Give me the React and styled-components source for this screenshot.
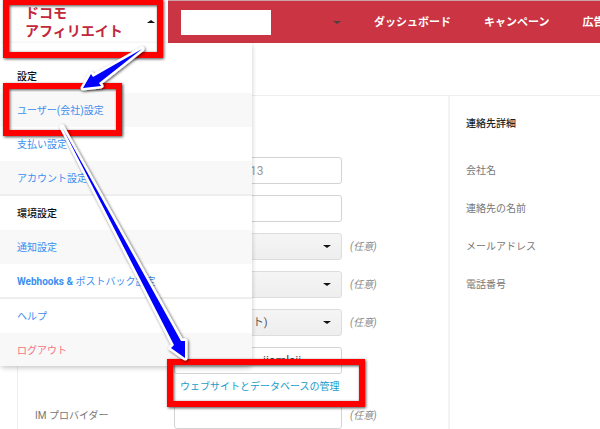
import React from "react";
import styled, { createGlobalStyle } from "styled-components";

const GlobalStyle = createGlobalStyle`
  * {
    box-sizing: border-box;
  }
  body {
    margin: 0;
    overflow: hidden;
    background: #fff;
    color: #777;
    font-family: Roboto, "Noto Sans CJK JP", sans-serif;
    font-size: 10px;
    line-height: 14px;
  }
  a {
    text-decoration: none;
  }
`;

const Page = styled.div`
  position: relative;
  min-height: 100vh;
  overflow: hidden;
`;
const Header = styled.header`
  display: flex;
  height: 43px;
`;
const Brand = styled.button`
  flex: 0 0 168px;
  display: flex;
  align-items: center;
  justify-content: space-between;
  padding: 0 13px 0 25px;
  border: 0;
  background: #fff;
  font: inherit;
`;
const Logo = styled.span`
  font-size: 14px;
  font-weight: 700;
  line-height: 18px;
  text-align: left;
  white-space: nowrap;
  color: #c1283c;
`;
const Bar = styled.div`
  flex: 1;
  min-width: 0;
  display: flex;
  align-items: center;
  padding-left: 13px;
  border-top: 1px solid #c9a3a8;
  background: #cb3442;
`;
const Account = styled.button`
  flex: 0 0 160px;
  display: flex;
  align-items: center;
  justify-content: space-between;
  padding: 0;
  border: 0;
  background: none;
`;
const AccountName = styled.span`
  width: 90px;
  height: 25px;
  background: #fff;
`;
const Nav = styled.nav`
  display: flex;
  gap: 33px;
  margin-left: 33px;
`;
const NavLink = styled.a`
  padding-top: 2px;
  font-size: 11px;
  font-weight: 700;
  line-height: 16px;
  white-space: nowrap;
  color: #fff;
`;
const Caret = styled.span`
  width: 0;
  height: 0;
  border: solid transparent;
  border-width: ${({ $up }) => ($up ? "0 4px 3px" : "3px 4px 0")};
  border-${({ $up }) => ($up ? "bottom" : "top")}-color: ${({ $color }) => $color || "#111"};
`;

const Menu = styled.nav`
  position: absolute;
  z-index: 1;
  top: 43px;
  left: 0;
  width: 252px;
  padding-top: 16px;
  border-radius: 0 0 5px 5px;
  background: #fff;
  box-shadow: 0 2px 5px rgba(0, 0, 0, 0.22);
`;
const MenuGroup = styled.div`
  & + & {
    border-top: 2px solid #eee;
  }
`;
const MenuTitle = styled.div`
  padding: 11px 17px 9px;
  font-weight: 500;
  color: #111;
`;
const MenuLink = styled.a`
  display: block;
  padding: 11px 17px 9px;
  background: ${({ $shade }) => ($shade ? "#f8f8f8" : "#fff")};
  color: ${({ $danger }) => ($danger ? "#f67280" : "#3c8ff0")};

  &:last-child {
    padding-bottom: 8px;
  }
`;
const Strong = styled.span`
  font-weight: 700;
`;

const Content = styled.main`
  display: flex;
  min-height: 334px;
  margin-top: 52px;
  border-top: 1px solid #eee;
`;
const Details = styled.form`
  flex: 0 0 433px;
  display: flex;
  flex-direction: column;
  gap: 11px;
  margin-left: 17px;
  padding: 61px 0 0 17px;
  border-left: 1px solid #eee;
  border-right: 2px solid #f3f3f3;
`;
const Field = styled.div`
  display: grid;
  grid-template-columns: 139px 168px auto;
  align-items: center;
`;
const Label = styled.label`
  white-space: nowrap;
`;
const Control = styled.div`
  display: grid;
  align-items: center;
  justify-items: end;

  & > * {
    grid-area: 1 / 1;
  }
  & > span {
    margin-right: 11px;
    pointer-events: none;
  }
`;
const Input = styled.input`
  width: 100%;
  height: 27px;
  padding: 0 8px 0 ${({ $indent }) => $indent || 8}px;
  border: 1px solid #d3d3d3;
  border-radius: 3px;
  background: #fff;
  font: inherit;
  font-size: 12px;
  color: ${({ $dark }) => ($dark ? "#444" : "#999")};
`;
const Select = styled.select`
  width: 100%;
  height: 27px;
  padding: 0 12px;
  appearance: none;
  border: 1px solid #ddd;
  border-radius: 3px;
  background: linear-gradient(#f5f5f5, #eee);
  font: inherit;
  font-size: 11px;
  color: #555;
`;
const Optional = styled.span`
  padding-left: 8px;
  font-style: italic;
  color: #888;
`;
const ManageLink = styled.a`
  align-self: flex-start;
  margin: -5px 0 -3px 145px;
  white-space: nowrap;
  color: #169dcc;
`;

const Contact = styled.section`
  flex: 1;
  padding: 21px 16px;
`;
const ContactTitle = styled.h2`
  margin: 0 0 33px;
  font-size: 10px;
  font-weight: 500;
  color: #222;
`;
const ContactRow = styled.div`
  margin-bottom: 24px;
`;

const Marks = styled.svg`
  position: absolute;
  z-index: 2;
  top: 0;
  left: 0;
  pointer-events: none;
`;

const menu = [
  {
    title: "設定",
    links: [
      { text: "ユーザー(会社)設定", shade: true },
      { text: "支払い設定" },
      { text: "アカウント設定", shade: true },
    ],
  },
  {
    title: "環境設定",
    links: [
      { text: "通知設定", shade: true },
      { strong: "Webhooks & ", text: "ポストバック設定" },
    ],
  },
  {
    links: [{ text: "ヘルプ" }, { text: "ログアウト", shade: true, danger: true }],
  },
];

const fields = [
  { id: "account", value: "13", indent: 75 },
  { id: "company" },
  { id: "currency", options: [""], optional: true },
  { id: "timezone", options: [""], optional: true },
  { id: "kind", options: ["アフィリエイト)"], optional: true },
  { id: "site", value: "iiomlsii", indent: 88, dark: true },
];

const contacts = ["会社名", "連絡先の名前", "メールアドレス", "電話番号"];

const FormField = ({ id, label, value, indent, dark, options, optional }) => (
  <Field>
    <Label htmlFor={id}>{label}</Label>
    <Control>
      {options ? (
        <>
          <Select id={id}>
            {options.map((o) => (
              <option key={o}>{o}</option>
            ))}
          </Select>
          <Caret />
        </>
      ) : (
        <Input id={id} defaultValue={value} $indent={indent} $dark={dark} />
      )}
    </Control>
    {optional && <Optional>(任意)</Optional>}
  </Field>
);

const App = () => {
  return (
    <Page>
      <GlobalStyle />
      <Header>
        <Brand>
          <Logo>
            ドコモ
            <br />
            アフィリエイト
          </Logo>
          <Caret $up />
        </Brand>
        <Bar>
          <Account aria-label="account">
            <AccountName />
            <Caret $color="#444" />
          </Account>
          <Nav>
            <NavLink href="#">ダッシュボード</NavLink>
            <NavLink href="#">キャンペーン</NavLink>
            <NavLink href="#">広告</NavLink>
          </Nav>
        </Bar>
      </Header>

      <Menu>
        {menu.map((group, i) => (
          <MenuGroup key={i}>
            {group.title && <MenuTitle>{group.title}</MenuTitle>}
            {group.links.map((link) => (
              <MenuLink key={link.text} href="#" $shade={link.shade} $danger={link.danger}>
                {link.strong && <Strong>{link.strong}</Strong>}
                {link.text}
              </MenuLink>
            ))}
          </MenuGroup>
        ))}
      </Menu>

      <Content>
        <Details>
          {fields.map((f) => (
            <FormField key={f.id} {...f} />
          ))}
          <ManageLink href="#">ウェブサイトとデータベースの管理</ManageLink>
          <FormField id="im" label="IM プロバイダー" optional />
        </Details>
        <Contact>
          <ContactTitle>連絡先詳細</ContactTitle>
          {contacts.map((c) => (
            <ContactRow key={c}>{c}</ContactRow>
          ))}
        </Contact>
      </Content>

      <Marks width="600" height="429" viewBox="0 0 600 429" aria-hidden="true">
        <defs>
          <filter id="drop" x="-20%" y="-20%" width="140%" height="140%">
            <feDropShadow dx="1" dy="1" stdDeviation="1.5" floodOpacity="0.7" />
          </filter>
        </defs>
        <g fill="none" stroke="#f00" strokeWidth="6" filter="url(#drop)">
          <rect x="6" y="2" width="154" height="53" />
          <rect x="6" y="86" width="113" height="47" />
          <rect x="170" y="362" width="192" height="42" />
        </g>
        <g fill="#00f" stroke="#fff" strokeWidth="5" strokeLinejoin="round" paintOrder="stroke" filter="url(#drop)">
          <path d="M142 49 L99 83 L101 86 L83 88 L91 74 L93 77 Z" />
          <path d="M62 127 L181 341 L185 341 L185 358 L171 348 L174 345 Z" />
        </g>
      </Marks>
    </Page>
  );
};

export default App;
